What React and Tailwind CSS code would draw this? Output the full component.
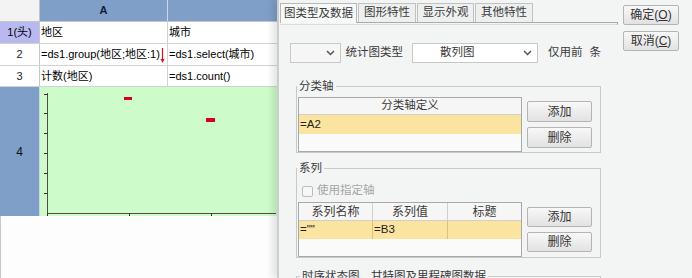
import React from "react";

const FONT = "font-['Liberation_Sans','Noto_Sans_CJK_SC',sans-serif]";

function Chevron() {
  return (
    <svg width="9" height="6" viewBox="0 0 9 6">
      <path d="M1 1l3.5 3.5L8 1" fill="none" stroke="#555" strokeWidth="1.5" />
    </svg>
  );
}

function Btn({ children, className = "" }) {
  return (
    <div
      className={
        "flex items-center justify-center border border-[#b4b4b4] rounded-[2px] bg-gradient-to-b from-[#f8f8f8] to-[#e2e2e2] text-[#333] text-[12px] leading-none " +
        className
      }
    >
      {children}
    </div>
  );
}

function Sheet() {
  return (
    <div className="w-[277px] h-full flex flex-col bg-white text-[11px] leading-none text-black">
      <div className="flex h-[22px] shrink-0 border-b border-[#c6c6c6]">
        <div className="w-[40px] bg-[#f3f3f3] border-r border-[#c6c6c6]" />
        <div className="w-[128px] bg-[#7f9ec8] border-r border-[#c9d6e6] flex items-center justify-center font-bold text-[#0f1f3a]">
          A
        </div>
        <div className="flex-1 bg-[#7f9ec8]" />
      </div>
      <div className="flex h-[22px] shrink-0 border-b border-[#d2d2d2]">
        <div className="w-[40px] bg-[#b9b9f2] border-r border-[#c6c6c6] flex items-center justify-center">
          1(头)
        </div>
        <div className="w-[128px] border-r border-[#d2d2d2] flex items-center pl-px">地区</div>
        <div className="flex-1 flex items-center pl-px">城市</div>
      </div>
      <div className="flex h-[22px] shrink-0 border-b border-[#d2d2d2]">
        <div className="w-[40px] border-r border-[#c6c6c6] flex items-center justify-center text-[#222]">2</div>
        <div className="relative w-[128px] border-r border-[#d2d2d2] flex items-center pl-px whitespace-nowrap">
          =ds1.group(地区;地区:1)
          <svg className="absolute right-[2px] top-[4px]" width="5" height="16" viewBox="0 0 5 16">
            <path d="M2.5 0v13" stroke="#e0101a" strokeWidth="1.2" />
            <path d="M0.5 11l2 4 2-4z" fill="#e0101a" />
          </svg>
        </div>
        <div className="flex-1 flex items-center pl-px whitespace-nowrap">=ds1.select(城市)</div>
      </div>
      <div className="flex h-[21px] shrink-0 border-b border-[#d2d2d2]">
        <div className="w-[40px] border-r border-[#c6c6c6] flex items-center justify-center text-[#222]">3</div>
        <div className="w-[128px] border-r border-[#d2d2d2] flex items-center pl-px">计数(地区)</div>
        <div className="flex-1 flex items-center pl-px">=ds1.count()</div>
      </div>
      <div className="flex h-[129px] shrink-0">
        <div className="w-[40px] bg-[#7f9ec8] border-r border-[#c9d6e6] flex items-center justify-center text-[12px] text-[#111]">
          4
        </div>
        <div className="flex-1 bg-[#cdfcca]">
          <svg width="236" height="129" viewBox="0 0 236 129">
            <path d="M7.5 6v120.5H236" fill="none" stroke="#5a4848" strokeWidth="1" />
            <path
              d="M4 7.5h3.5M4 26.5h3.5M4 46.5h3.5M4 66.5h3.5M4 86.5h3.5M4 106.5h3.5M7.5 126v3M89.5 126v3M171.5 126v3"
              stroke="#3a3030"
              strokeWidth="1"
            />
            <rect x="84" y="10" width="8" height="3" fill="#d4002a" />
            <rect x="166" y="31" width="9" height="4" fill="#d4002a" />
          </svg>
        </div>
      </div>
      <div className="flex-1 bg-[#fdfdfd] border-l border-[#c8c8c8]" />
    </div>
  );
}

function Dialog() {
  return (
    <div className="relative flex-1 h-full flex bg-[#f3f4f4] border-l-2 border-[#cdcdcd] shadow-[-5px_0_6px_rgba(0,0,0,0.10)] text-[#3a3a3a] text-[11.5px] leading-none">
      <div className="ml-px w-[338px] flex flex-col pt-[3px]">
        <div className="flex gap-px h-[19px] items-end">
          <div className="relative z-10 w-[77px] h-[20px] -mb-px bg-[#f7f8f8] border border-b-0 border-[#b8b8b8] flex items-center justify-center">
            图类型及数据
          </div>
          <div className="w-[58px] h-[19px] bg-[#eeefef] border border-b-0 border-[#c2c2c2] flex items-center justify-center">
            图形特性
          </div>
          <div className="w-[57px] h-[19px] bg-[#eeefef] border border-b-0 border-[#c2c2c2] flex items-center justify-center">
            显示外观
          </div>
          <div className="w-[58px] h-[19px] bg-[#eeefef] border border-b-0 border-[#c2c2c2] flex items-center justify-center">
            其他特性
          </div>
        </div>
        <div className="h-[3px] border-t border-r border-[#a9a9a9] border-b border-b-[#dcdcdc]" />
        <div className="flex-1 overflow-hidden pl-[10px] pr-[17px]">
          <div className="mt-[18px] flex items-center h-[20px] whitespace-nowrap">
            <div className="w-[53px] h-[20px] border border-[#c8c8c8] bg-[#f6f6f6] flex items-center justify-end pr-[5px]">
              <Chevron />
            </div>
            <span className="ml-[5px]">统计图类型</span>
            <div className="ml-[9px] w-[131px] h-[20px] border border-[#c8c8c8] bg-white flex items-center pl-[27px] pr-[5px]">
              <span className="flex-1">散列图</span>
              <Chevron />
            </div>
            <span className="ml-[10px]">仅用前</span>
            <span className="ml-[7px]">条</span>
          </div>

          <fieldset className="mt-[16px] ml-[6px] w-[305px] border border-[#c9c9c9] pb-0">
            <legend className="ml-0 px-[2px] leading-[14px]">分类轴</legend>
            <div className="flex pl-px mt-[4px]">
              <div className="w-[224px] h-[55px] border border-[#a9a9a9] bg-[#fafafa] flex flex-col">
                <div className="h-[17px] border-b border-[#cfcfcf] bg-[#f6f6f6] flex items-center justify-center">
                  分类轴定义
                </div>
                <div className="h-[19px] bg-[#fbe49f] flex items-center pl-px text-[#222]">=A2</div>
              </div>
              <div className="ml-[5px] pt-[4px] flex flex-col gap-[5px]">
                <Btn className="w-[65px] h-[21px]">添加</Btn>
                <Btn className="w-[65px] h-[21px]">删除</Btn>
              </div>
            </div>
          </fieldset>

          <fieldset className="mt-[8px] ml-[6px] w-[305px] border border-[#c9c9c9]">
            <legend className="ml-0 px-[2px] leading-[14px]">系列</legend>
            <div className="mt-[9px] ml-[5px] flex items-center h-[14px] text-[#a6a6a6]">
              <div className="w-[11px] h-[11px] border border-[#bcbcbc] rounded-[2px] bg-[#f7f7f7]" />
              <span className="ml-[4px]">使用指定轴</span>
            </div>
            <div className="flex pl-px mt-[4px]">
              <div className="w-[224px] h-[55px] border border-[#a9a9a9] bg-[#fafafa] flex flex-col">
                <div className="h-[18px] border-b border-[#cfcfcf] bg-[#f6f6f6] flex text-[12px]">
                  <div className="w-[74px] border-r border-[#cfcfcf] flex items-center justify-center">系列名称</div>
                  <div className="w-[75px] border-r border-[#cfcfcf] flex items-center justify-center">系列值</div>
                  <div className="flex-1 flex items-center justify-center">标题</div>
                </div>
                <div className="h-[18px] bg-[#fbe49f] flex text-[#222]">
                  <div className="w-[74px] border-r border-[#d9c27c] flex items-center pl-px">=""</div>
                  <div className="w-[75px] border-r border-[#d9c27c] flex items-center pl-px">=B3</div>
                  <div className="flex-1" />
                </div>
              </div>
              <div className="ml-[5px] pt-[5px] flex flex-col gap-[5px]">
                <Btn className="w-[65px] h-[20px]">添加</Btn>
                <Btn className="w-[65px] h-[20px]">删除</Btn>
              </div>
            </div>
          </fieldset>

          <fieldset className="mt-[11px] ml-[6px] w-[305px] h-[40px] border border-[#c9c9c9]">
            <legend className="ml-[3px] px-[2px] leading-[14px] whitespace-nowrap">时序状态图、甘特图及里程碑图数据</legend>
          </fieldset>
        </div>
      </div>
      <div className="ml-[5px] pt-[5px] flex flex-col gap-[6px]">
        <Btn className="w-[56px] h-[20px] bg-gradient-to-b from-[#e9eaec] to-[#d6d7da] border-[#a8a8a8] text-[#4a4a4a]">
          确定(<span className="underline">O</span>)
        </Btn>
        <Btn className="w-[56px] h-[20px] text-[#4a4a4a]">
          取消(<span className="underline">C</span>)
        </Btn>
      </div>
    </div>
  );
}

export default function App() {
  return (
    <div className={"w-[692px] h-[278px] flex overflow-hidden bg-white " + FONT}>
      <Sheet />
      <Dialog />
    </div>
  );
}
